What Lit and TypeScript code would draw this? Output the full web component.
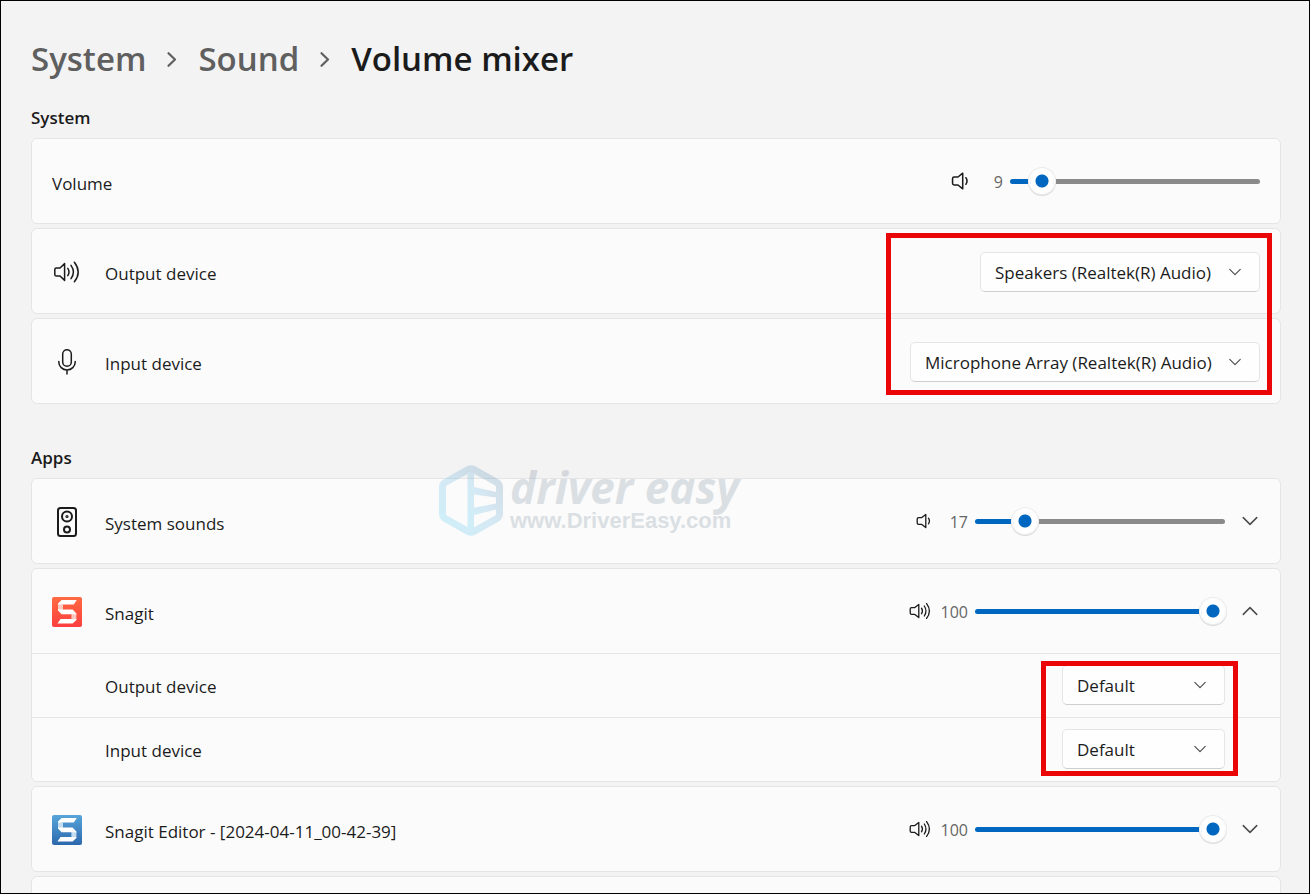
import { LitElement, html, css, svg, nothing } from "lit";
import { customElement, property, state } from "lit/decorators.js";

const WAVES = [
  "M12.5 8.2 Q14.4 11 12.5 13.8",
  "M15.3 6 Q18.6 11 15.3 16",
  "M17.6 3.6 Q23.2 11 17.6 18.4",
];

const speakerShape = (waves: number) => svg`
  <path d="M9.8 4.4 L5.8 7.6 H2.6 Q1.2 7.6 1.2 9 V13 Q1.2 14.4 2.6 14.4 H5.8 L9.8 17.6 Z"></path>
  ${WAVES.slice(0, waves).map((d) => svg`<path d=${d}></path>`)}`;

@customElement("speaker-icon")
export class SpeakerIcon extends LitElement {
  @property({ type: Number }) waves = 1;
  @property({ type: Number }) size = 22;
  static styles = css`
    :host { display: block; }
    svg { display: block; fill: none; stroke: #1b1b1b; stroke-width: 1.3; stroke-linecap: round; stroke-linejoin: round; }
  `;
  render() {
    const units = this.waves === 1 ? 15 : 22;
    const width = Math.round((this.size * units) / 22);
    return html`<svg width=${width} height=${this.size} viewBox="0 0 ${units} 22" aria-hidden="true">
      ${speakerShape(this.waves)}
    </svg>`;
  }
}

@customElement("chevron-icon")
export class ChevronIcon extends LitElement {
  @property({ reflect: true }) direction = "down";
  @property({ type: Number }) size = 16;
  static styles = css`
    :host { display: block; }
    svg { display: block; fill: none; stroke: #4a4a4a; stroke-width: 1.3; stroke-linecap: round; stroke-linejoin: round; }
    :host([direction="right"]) svg { stroke: #5f5f5f; stroke-width: 1.8; }
  `;
  render() {
    const d =
      this.direction === "up" ? "M2 11 L8 5 L14 11" : this.direction === "right" ? "M5.2 3.4 L10.4 8.4 L5.2 13.4" : "M2 5 L8 11 L14 5";
    return html`<svg width=${this.size} height=${this.size} viewBox="0 0 16 16" aria-hidden="true"><path d=${d}></path></svg>`;
  }
}

@customElement("volume-slider")
export class VolumeSlider extends LitElement {
  @property({ type: Number }) value = 0;
  @property() name = "";
  @property({ type: Boolean }) large = false;
  static styles = css`
    :host { display: flex; align-items: center; margin-bottom: 1px; font: 16px/24px "Open Sans", "Noto Sans", sans-serif; }
    button { border: 0; background: none; padding: 0; margin: 0 5px 1px 0; width: 24px; height: 24px; display: flex; align-items: center; justify-content: flex-end; }
    :host([large]) button { margin-right: 2px; }
    output { width: 32px; text-align: right; color: #666; margin-right: 7px; }
    input {
      appearance: none; margin: 0; width: 250px; height: 26px; background: none;
      --fill: calc(12px + (100% - 24px) * var(--level) / 100);
    }
    input::-webkit-slider-runnable-track {
      height: 5px; border-radius: 3px;
      background: linear-gradient(to right, #0067c0 var(--fill), #8a8a8a var(--fill));
    }
    input::-webkit-slider-thumb {
      appearance: none; width: 24px; height: 24px; margin-top: -10px; border-radius: 50%;
      background: radial-gradient(circle, #0067c0 6px, #fff 7px);
      box-shadow: 0 0 0 1px #fff, 0 0 0 2px #ececec, 0 1px 0 2px #dcdcdc;
    }
  `;
  private onInput(e: Event) {
    this.value = Number((e.target as HTMLInputElement).value);
  }
  render() {
    const waves = this.value > 66 ? 3 : this.value > 33 ? 2 : 1;
    return html`
      <button aria-label="Mute ${this.name}"><speaker-icon .waves=${waves} .size=${this.large ? 26 : 22}></speaker-icon></button>
      <output for="level">${this.value}</output>
      <input id="level" type="range" min="0" max="100" aria-label="${this.name} volume" .value=${String(this.value)}
        style="--level:${this.value}" @input=${this.onInput} />`;
  }
}

@customElement("device-picker")
export class DevicePicker extends LitElement {
  @property() name = "";
  @property() choice = "";
  static styles = css`
    :host { display: grid; align-items: center; font: 17px/24px "Open Sans", "Noto Sans", sans-serif; }
    select {
      grid-area: 1 / 1; appearance: none; font: inherit; color: #1b1b1b; background: #fefefe;
      height: 40px; min-width: 163px; padding: 2px 47px 0 14px;
      border: 1px solid #e5e5e5; border-bottom-color: #cfcfcf; border-radius: 5px;
    }
    chevron-icon { grid-area: 1 / 1; justify-self: end; margin-right: 18px; pointer-events: none; }
  `;
  render() {
    return html`<select aria-label=${this.name}><option>${this.choice}</option></select>
      <chevron-icon .size=${14}></chevron-icon>`;
  }
}

const microphone = html`<svg width="30" height="30" viewBox="0 0 30 30" class="line" aria-hidden="true">
  <rect x="10.7" y="2.7" width="8.6" height="16.6" rx="4.3"></rect>
  <path d="M6.8 14.5 V15 A8.2 8 0 0 0 23.2 15 V14.5 M15 23 V27"></path>
</svg>`;

const loudspeaker = html`<svg width="30" height="30" viewBox="0 0 30 30" class="line" aria-hidden="true">
  <path d="M12.6 6.6 L8 11 H4.4 Q2.8 11 2.8 12.6 V17.4 Q2.8 19 4.4 19 H8 L12.6 23.4 Z"></path>
  <path d="M15.8 11.4 Q18.2 15 15.8 18.6 M19 8.4 Q23.8 15 19 21.6 M22.4 5.2 Q30 15 22.4 24.8"></path>
</svg>`;

const speakerBox = html`<svg width="30" height="32" viewBox="0 0 30 32" class="line bold" aria-hidden="true">
  <rect x="6" y="2" width="18" height="28" rx="2.5"></rect>
  <circle cx="15" cy="10.5" r="5"></circle>
  <circle cx="15" cy="10.5" r="0.6"></circle>
  <circle cx="15" cy="23.5" r="3"></circle>
</svg>`;

const snagit = (id: string, top: string, bottom: string, shade: string) => html`<svg width="30" height="30" viewBox="0 0 30 30" aria-hidden="true">
  <defs><linearGradient id=${id} x1="0" y1="0" x2="0" y2="1">
    <stop offset="0" stop-color=${top}></stop><stop offset="1" stop-color=${bottom}></stop>
  </linearGradient></defs>
  <rect width="30" height="30" rx="2" fill="url(#${id})"></rect>
  <path fill=${shade} d="M6 6.6 L11 7.4 V13 H7.6 L6 11.6 Z M24.4 22.4 L19.4 22 V16.6 H22.6 L24.4 18 Z"></path>
  <path fill="#fff" d="M9.6 3 H24.8 L21.8 7.6 H6 V6.4 Z M6 11.4 L7.8 12.6 H20.6 L24.4 16.4 V18 L22.4 17.2 H9.6 L6 13.6 Z M20.6 26.6 H5.4 L8.6 22 H24.4 V23 Z"></path>
</svg>`;

const hexagon = html`<svg width="64" height="71" viewBox="0 0 64 71" aria-hidden="true">
  <defs><linearGradient id="brand" x1="0" y1="1" x2="1" y2="0">
    <stop offset="0" stop-color="#20c4f4"></stop><stop offset="0.5" stop-color="#3fa5dc"></stop><stop offset="1" stop-color="#336594"></stop>
  </linearGradient></defs>
  <path fill="none" stroke="url(#brand)" stroke-width="7" stroke-linejoin="round"
    d="M29 4.6 Q32 3 35 4.6 L57.5 17.2 Q60.5 19 60.5 22 V49 Q60.5 52 57.5 53.8 L35 66.4 Q32 68 29 66.4 L6.5 53.8 Q3.5 52 3.5 49 V22 Q3.5 19 6.5 17.2 Z"></path>
  <path fill="url(#brand)" d="M28.5 7 H35 V22 L57.2 27 V32.4 L35 29.6 V42.8 L57.2 38.4 V44.4 L35 50 V64 H28.5 Z"></path>
</svg>`;

interface App {
  name: string;
  volume: number;
  icon: unknown;
  open: boolean;
}

@customElement("app-root")
export class AppRoot extends LitElement {
  @state() private apps: App[] = [
    { name: "System sounds", volume: 17, icon: speakerBox, open: false },
    { name: "Snagit", volume: 100, icon: snagit("red", "#ff6b42", "#fb3f3f", "#ffc9bf"), open: true },
    { name: "Snagit Editor - [2024-04-11_00-42-39]", volume: 100, icon: snagit("blue", "#58a5da", "#2c68ad", "#c3dcf0"), open: false },
  ];

  static styles = css`
    :host { display: block; font: 17px/24px "Open Sans", "Noto Sans", sans-serif; color: #1b1b1b; }
    * { box-sizing: border-box; }
    main { height: 100vh; overflow: hidden; border: 1px solid #000; background: #f3f3f3; padding: 34px 28px 0 30px; }
    h1, h2, ol { margin: 0; padding: 0; }
    ol { display: flex; align-items: center; list-style: none; margin-bottom: 23px; }
    li { display: flex; align-items: center; font-size: 33px; line-height: 48px; font-weight: 600; }
    li chevron-icon { margin: 0 16px; }
    li a { color: #5f5f5f; text-decoration: none; }
    h1 { font: inherit; }
    h2 { font-size: 17px; line-height: 24px; font-weight: 600; margin-bottom: 8px; }
    section { position: relative; margin-bottom: 42px; }
    .list { display: grid; gap: 4px; }
    .card { background: #fbfbfb; border: 1px solid #e5e5e5; border-radius: 6px; }
    .row { display: flex; align-items: center; height: 84px; padding: 2px 20px 0; }
    .icon { display: grid; place-items: center; width: 30px; margin-right: 23px; }
    .line { fill: none; stroke: #1b1b1b; stroke-width: 1.5; stroke-linecap: round; stroke-linejoin: round; }
    .bold { stroke-width: 2; }
    .label { flex: 1; padding-top: 4px; }
    .toggle { border: 0; background: none; padding: 0; width: 20px; height: 32px; margin: 0 0 2px 15px; display: grid; place-items: center; }
    .sub { display: flex; align-items: center; height: 64px; padding: 0 55px 1px 73px; border-top: 1px solid #e5e5e5; }
    .mark { position: absolute; border: 5px solid #ea0606; pointer-events: none; }
    .devices { top: 127px; right: 9px; width: 386px; height: 162px; }
    .defaults { top: 215px; right: 43px; width: 197px; height: 115px; }
    .watermark { position: absolute; left: 408px; top: 19px; display: flex; gap: 7px; opacity: 0.2; pointer-events: none; }
    .words { display: grid; align-content: start; color: #5b7285; }
    .brand { font: italic 700 44px/44px "Open Sans", sans-serif; }
    .site { font: bold 22px/24px "Liberation Sans", sans-serif; }
  `;

  private toggle(app: App) {
    this.apps = this.apps.map((a) => (a === app ? { ...a, open: !a.open } : a));
  }

  private deviceRow(name: string, choice: string, icon: unknown) {
    return html`<div class="card"><div class="row">
      <span class="icon">${icon}</span><span class="label">${name}</span>
      <device-picker .name=${name} .choice=${choice}></device-picker>
    </div></div>`;
  }

  private subRow(app: App, name: string) {
    return html`<div class="sub"><span class="label">${name}</span>
      <device-picker .name="${app.name} ${name}" .choice=${"Default"}></device-picker></div>`;
  }

  private appCard(app: App) {
    return html`<div class="card">
      <div class="row">
        <span class="icon">${app.icon}</span><span class="label">${app.name}</span>
        <volume-slider .name=${app.name} .value=${app.volume}></volume-slider>
        <button class="toggle" aria-label="${app.name} options" aria-expanded=${app.open} @click=${() => this.toggle(app)}>
          <chevron-icon .direction=${app.open ? "up" : "down"} .size=${18}></chevron-icon>
        </button>
      </div>
      ${app.open ? html`${this.subRow(app, "Output device")}${this.subRow(app, "Input device")}` : nothing}
    </div>`;
  }

  render() {
    return html`<main>
      <nav aria-label="Breadcrumb"><ol>
        <li><a href="#system">System</a><chevron-icon .direction=${"right"} .size=${20}></chevron-icon></li>
        <li><a href="#sound">Sound</a><chevron-icon .direction=${"right"} .size=${20}></chevron-icon></li>
        <li><h1>Volume mixer</h1></li>
      </ol></nav>
      <section>
        <h2>System</h2>
        <div class="list">
          <div class="card"><div class="row">
            <span class="label">Volume</span>
            <volume-slider .name=${"System"} .value=${9} large></volume-slider>
          </div></div>
          ${this.deviceRow("Output device", "Speakers (Realtek(R) Audio)", loudspeaker)}
          ${this.deviceRow("Input device", "Microphone Array (Realtek(R) Audio)", microphone)}
        </div>
        <div class="mark devices"></div>
      </section>
      <section>
        <h2>Apps</h2>
        <div class="list">
          ${this.apps.map((app) => this.appCard(app))}
          <div class="card"><div class="row"></div></div>
        </div>
        <div class="mark defaults"></div>
        <div class="watermark">${hexagon}
          <div class="words"><span class="brand">driver easy</span><span class="site">www.DriverEasy.com</span></div>
        </div>
      </section>
    </main>`;
  }
}
